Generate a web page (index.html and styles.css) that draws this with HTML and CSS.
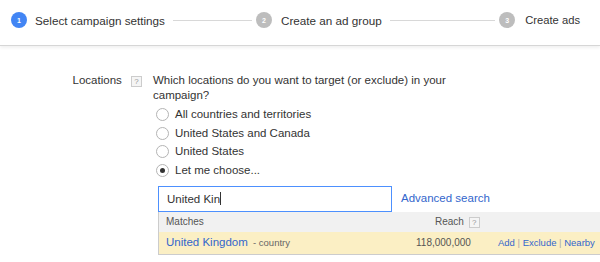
FILE: index.html
```html
<!DOCTYPE html>
<html lang="en">
<head>
    <meta charset="UTF-8">
    <title>Select campaign settings</title>
    <link rel="stylesheet" href="styles.css">
</head>
<body>

<!-- Steps -->
<div class="steps">
    <div class="step active"><span class="num">1</span>Select campaign settings</div>
    <div class="line first"></div>
    <div class="step"><span class="num">2</span>Create an ad group</div>
    <div class="line second"></div>
    <div class="step last"><span class="num">3</span>Create ads</div>
</div>

<div class="form">
    <div class="label">Locations <span class="help">?</span></div>
    <div class="field">
        <div class="question">Which locations do you want to target (or exclude) in your campaign?</div>
        <div class="radios">
            <label class="radio"><span class="dot"></span>All countries and territories</label>
            <label class="radio"><span class="dot"></span>United States and Canada</label>
            <label class="radio"><span class="dot"></span>United States</label>
            <label class="radio"><span class="dot checked"></span>Let me choose...</label>
        </div>
        <div class="search">
            <div class="input">United Kin<span class="caret"></span></div>
            <a class="link">Advanced search</a>
        </div>
        <div class="results">
            <div class="head">
                <span class="matches">Matches</span>
                <span class="reach">Reach <span class="help">?</span></span>
            </div>
            <div class="row">
                <span class="name"><a class="link">United Kingdom</a> <span class="type">- country</span></span>
                <span class="count">118,000,000</span>
                <span class="actions"><a>Add</a> | <a>Exclude</a> | <a>Nearby</a></span>
            </div>
        </div>
    </div>
</div>

</body>
</html>
```

FILE: styles.css
```css
body {
    font-family: Arial, "Liberation Sans", sans-serif;
    font-size: 11.5px;
    color: #333;
    margin: 0;
    background: #fff;
    overflow: hidden;
}
.steps {
    display: flex;
    align-items: center;
    height: 40px;
    padding: 0 20px 5px 11px;
    border-bottom: 1px solid #d6d6d6;
    box-shadow: 0 2px 3px rgba(0, 0, 0, 0.06);
}
.step {
    display: flex;
    align-items: center;
    font-size: 11.7px;
    color: #333;
    white-space: nowrap;
}
.step.last {
    font-size: 11.2px;
}
.num {
    width: 16px;
    height: 16px;
    border-radius: 50%;
    background: #bdbdbd;
    color: #fff;
    font-size: 7px;
    font-weight: bold;
    display: flex;
    align-items: center;
    justify-content: center;
    margin-right: 9px;
}
.step.active .num {
    background: #4285f4;
    margin-right: 8px;
}
.step.last .num {
    margin-right: 10px;
}
.line {
    height: 1px;
    background: #d8d8d8;
    margin: 0 4px 0 8px;
}
.line.first {
    width: 79px;
}
.line.second {
    flex: 1;
}
.form {
    display: flex;
    padding-top: 27px;
    line-height: 15px;
}
.label {
    width: 142px;
    text-align: right;
    color: #333;
    flex-shrink: 0;
}
.help {
    display: inline-block;
    width: 9px;
    height: 9px;
    line-height: 9px;
    border: 1px solid #ccc;
    font-size: 8px;
    color: #999;
    text-align: center;
    margin-left: 6px;
    vertical-align: 0;
    background: #f5f5f5;
}
.field {
    flex: 1;
    margin-left: 11px;
}
.question {
    width: 300px;
    color: #333;
}
.radios {
    margin-top: 2px;
}
.radio {
    display: flex;
    align-items: center;
    height: 18.7px;
    margin-left: 3px;
    color: #333;
}
.dot {
    width: 11px;
    height: 11px;
    border: 1px solid #b4b4b4;
    border-radius: 50%;
    margin-right: 6px;
    position: relative;
    background: #fff;
}
.dot.checked::after {
    content: "";
    position: absolute;
    left: 3px;
    top: 3px;
    width: 5px;
    height: 5px;
    border-radius: 50%;
    background: #333;
}
.search {
    display: flex;
    align-items: center;
    margin-top: 6px;
    margin-left: 5px;
}
.input {
    width: 224px;
    height: 24px;
    line-height: 24px;
    border: 1px solid #4d90fe;
    padding-left: 8px;
    font-size: 11.5px;
    color: #333;
}
.caret {
    display: inline-block;
    width: 1px;
    height: 13px;
    background: #333;
    vertical-align: -2px;
}
.link {
    color: #3366cc;
}
.search .link {
    margin-left: 9px;
}
.results {
    margin-left: 5px;
    border: 1px solid #ccc;
    border-top: none;
    width: 460px;
}
.head {
    display: flex;
    align-items: center;
    height: 20px;
    background: #f1f1f1;
    font-size: 10px;
    color: #555;
    padding-left: 7px;
}
.matches {
    width: 269px;
}
.reach .help {
    margin-left: 2px;
}
.row {
    display: flex;
    align-items: center;
    height: 22px;
    background: #fbefc4;
    padding-left: 7px;
}
.name {
    width: 250px;
    font-size: 11.5px;
}
.type {
    font-size: 9.5px;
    color: #666;
    margin-left: 2px;
}
.count {
    width: 63px;
    color: #555;
    font-size: 10px;
}
.actions {
    margin-left: 19px;
    font-size: 9.5px;
    color: #aaa;
}
.actions a {
    color: #3366cc;
}
```
